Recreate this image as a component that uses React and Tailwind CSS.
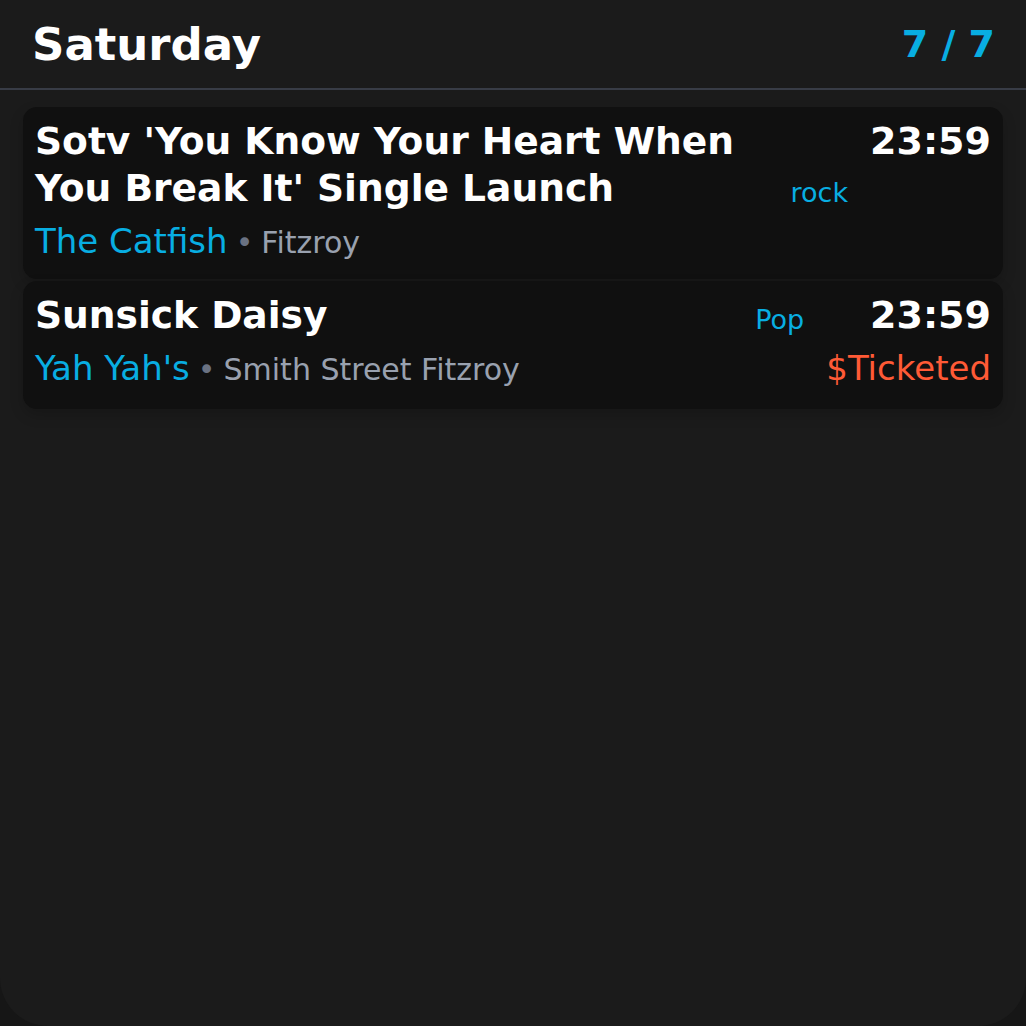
const events = [
  {
    title: "Sotv 'You Know Your Heart When You Break It' Single Launch",
    venue: 'The Catfish',
    area: 'Fitzroy',
    genre: 'rock',
    time: '23:59',
    price: null,
  },
  {
    title: 'Sunsick Daisy',
    venue: "Yah Yah's",
    area: 'Smith Street Fitzroy',
    genre: 'Pop',
    time: '23:59',
    price: '$Ticketed',
  },
]

function EventCard({ ev }) {
  return (
    <div className="bg-[#101010] rounded-[14px] px-3 pt-[11px] pb-[13px] shadow-[0_6px_14px_rgba(0,0,0,0.18)]">
      <div className="grid grid-cols-[1fr_auto_auto] gap-x-[22px] items-baseline">
        <div className="text-[37.6px] leading-[47px] font-bold text-white">{ev.title}</div>
        <div className="self-end text-[27px] leading-[39px] text-[#08aee2]">{ev.genre}</div>
        <div className="text-right text-[38px] leading-[47px] font-bold text-white">{ev.time}</div>

        <div className="col-span-2 mt-[4px] flex items-baseline whitespace-nowrap">
          <span className="text-[34px] leading-[50px] text-[#08aee2]">{ev.venue}</span>
          <span className="mx-[8px] text-[30px] text-gray-500">•</span>
          <span className="text-[30px] text-gray-400">{ev.area}</span>
        </div>
        {ev.price && (
          <div className="mt-[4px] mb-[3px] text-right text-[34px] leading-[50px] text-[#ff5a36] whitespace-nowrap">
            {ev.price}
          </div>
        )}
      </div>
    </div>
  )
}

export default function App() {
  return (
    <div className="bg-[#161616] h-screen">
      <div
        className="h-full bg-[#1b1b1b] rounded-b-[48px]"
        style={{ fontFamily: '"DejaVu Sans", "Noto Sans", sans-serif' }}
      >
        <div className="h-[90px] flex items-center justify-between pl-8 pr-[31px] border-b-2 border-[#383c46]">
          <h1 className="text-[45px] font-bold text-white leading-none">Saturday</h1>
          <span className="text-[38px] font-bold text-[#08aee2] leading-none">7 / 7</span>
        </div>
        <div className="px-[23px] pt-[17px] flex flex-col gap-[2px]">
          {events.map((ev) => (
            <EventCard key={ev.title} ev={ev} />
          ))}
        </div>
      </div>
    </div>
  )
}
